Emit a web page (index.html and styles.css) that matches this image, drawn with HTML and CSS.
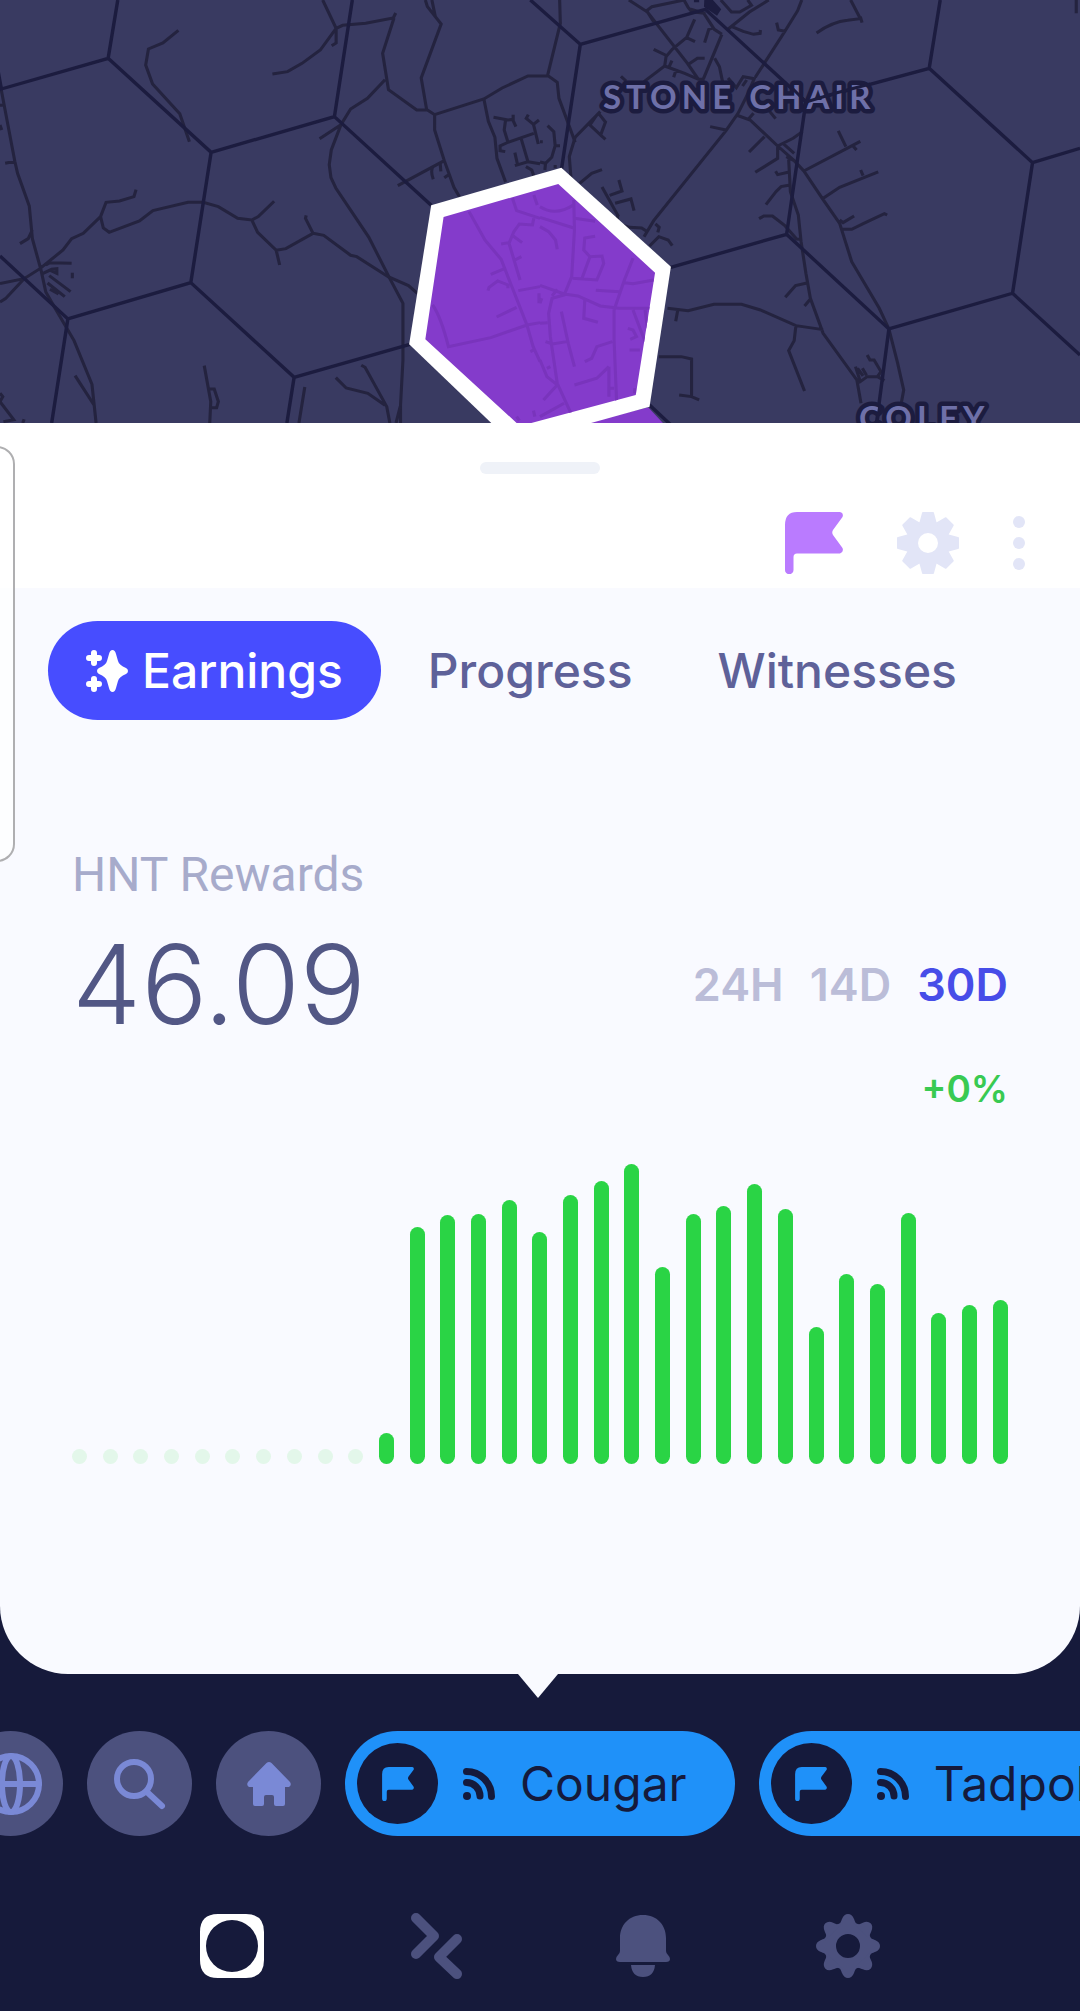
FILE: index.html
```html
<!DOCTYPE html>
<html lang="en">
<head>
    <meta charset="utf-8">
    <meta name="viewport" content="width=device-width, initial-scale=1">
    <title>Hotspot Rewards</title>
    <link rel="stylesheet" href="styles.css">
</head>
<body>
    <!-- shared icons -->
    <svg class="sprite" aria-hidden="true">
        <symbol id="flag" viewBox="0 0 58 62">
            <path d="M12 0H55Q59 1 57.500 5L48 18Q46.500 20.500 48 23L57.500 36Q59 40 55 41.500H12Q8.500 41.500 8.500 45V58A4.200 4.200 0 0 1 0 58V13Q0 0 12 0Z"/>
        </symbol>
        <symbol id="signal" viewBox="0 0 32 32">
            <circle cx="4" cy="28" r="4"/>
            <path d="M3.500 14.500A13.500 13.500 0 0 1 17 28M3.500 3.500A25 25 0 0 1 28.500 28.500" fill="none" stroke="currentColor" stroke-width="7" stroke-linecap="round"/>
        </symbol>
    </svg>

    <div class="map">
        <svg class="map-canvas" viewBox="0 0 1080 423" preserveAspectRatio="xMidYMin slice" role="img" aria-label="Hotspot map">
            <defs>
                <clipPath id="selected">
                    <path d="M1288 651L1621 552L1902 818L1846 1185L1500 1281V1269L1235 1018Z"/>
                </clipPath>
            </defs>
            <g transform="scale(.3444 .3333)">
                <!-- roads, west side -->
                <path class="road" d="M518 91L473 129L431 147L423 195L443 252L522 341L550 425M937 0L976 85L930 150L877 190L835 215L791 222M976 85L995 76L1062 70L1142 54L1149 39M976 85V129L963 137M1144 54L1111 160L1128 269L1210 330H1241L1262 344L1405 297L1458 264L1533 228H1568M1118 239L1067 295L1018 327L990 374L962 450L956 494L961 533L975 564L1071 712L1129 830L1170 910V1080L1163 1215V1269M928 416L990 374M1235 0L1241 20L1281 72L1223 234L1239 330M1254 0L1264 50M1262 344V390L1290 482L1318 562L1334 590M1290 482L1155 557M1256 503Q1250 515 1258 538M1278 488L1280 514M1306 522L1290 533"/>
                <path class="road" d="M1405 297L1418 364L1437 412L1443 475L1468 546M1433 352L1475 360L1490 358V344M1487 355L1498 380M1468 360L1464 390L1475 427L1452 438V452L1467 455M1475 427L1550 400M1534 344L1528 355L1549 373L1565 360M1549 373L1563 432M1513 415L1533 485L1495 497M1495 458L1503 495M1533 485L1568 491M1527 500L1544 510L1550 528"/>
                <path class="road" d="M0 250L43 484L51 520L85 618L94 716L119 810L133 876L160 925L215 1022L267 1153L279 1269M0 316H8M0 375L5 390M15 490L43 484M94 690L82 716L58 731M0 851L70 836L116 806L183 750L208 716L242 700L292 650L308 607L347 603L389 590L395 569M292 650L300 684L317 697L405 663L444 632L546 607H590L634 620L690 655L731 660L750 650L796 604M731 660L748 697L802 751L812 795M802 751L830 746L909 700L887 655L889 646M909 700L940 706L1018 766L1036 770L1127 830L1186 857L1212 880M0 906L16 896L70 836M133 795L145 788L208 790M125 820L150 808L165 806V820L148 812M210 818V835M143 827L205 875M138 849L188 890M145 868L170 882M218 1127L273 1215M593 1097L612 1205L609 1269M609 1167H622L634 1205L629 1223H612M885 1161L868 1269M975 1133L1005 1164L1068 1180L1118 1216M1049 1096L1060 1102L1123 1220L1132 1269M1162 1220L1150 1269M0 1180L8 1190L0 1205L40 1259L10 1265M70 1258L66 1269"/>
                <!-- roads, east side -->
                <g transform="translate(1568 0)">
                    <path class="road" d="M57 0L59 70L22 226L50 247L55 295L102 427M0 228H22M258 0L312 36L428 190L460 238M305 36L325 20L418 0M312 36L330 65M418 0L430 22L440 35L476 40L506 88L528 103M430 25L480 40M525 0L556 36H580L614 16L603 0M664 0L608 36L543 90M760 0L748 32L712 92L625 232M687 68L692 90L712 94M803 99Q850 65 893 61L930 56L902 0M930 50L935 68M1557 0V40M557 80L590 94L620 103L639 100L640 90M528 103L475 235M505 83L490 88L478 128M449 58L426 112L384 148L366 170L362 198L302 245M330 148L370 168M383 182L375 200M424 112L450 125M362 198L420 220L460 238H478M395 210L388 232M428 195L457 175H478M507 175L521 200L530 245M235 229L250 243M546 234L570 263L590 230L622 236L604 280L575 340L540 392L330 662L302 710M600 240L588 258M494 380L540 390M570 345L610 360L690 438L738 482L766 513L820 596L870 670L905 785L985 925L1013 987L1038 1088L1056 1170L1048 1215M606 356L620 340M665 332L684 356M652 410L607 456M690 438L735 415L762 395M690 438V475L625 517M707 432L738 460M715 470L738 482M722 478L727 575L750 645L758 725L772 820L785 895L822 1000L920 1140L932 1210M684 514L690 524L720 517M722 556L700 560L685 575L656 614M766 513L930 424M866 393L888 440M909 438L919 450M820 596L870 562L982 516M931 510L938 527M870 660L880 668L912 648M875 688H905L940 670L1000 641L1008 645M636 656L650 648H675L710 676L745 717L755 718M775 849L742 857L712 892M787 895L768 918M370 925L430 932L505 913H585L640 930L743 977L822 989M400 930L394 964M743 977L738 1022L722 1052L768 1173M345 1070H410L440 1077V1188M404 1185L440 1190L462 1200M916 1100L930 1145L950 1130H980L990 1115L970 1080H958L950 1065M922 1105L938 1128M936 1105L948 1126M980 1130L1000 1142"/>
                    <path class="road" d="M175 335L102 412L85 470L90 535M170 340L190 366L176 405L145 375L165 345M176 405L190 418M115 550L150 520L180 509M180 561L228 650M229 540L238 573L202 586M218 610L264 597L273 632M225 645V670L260 682L295 684L312 695M335 672L346 682L342 697M318 738L345 710L372 720L384 737M22 377L40 395L44 437L34 472L16 490L0 486M44 437H58M0 425H8M16 490L14 510M44 495V505"/>
                </g>
                <path class="block" d="M2045 0H2070L2094 28L2082 47L2044 20ZM2015 0H2030V7H2015Z"/>

                <path class="cell" d="M342 0L314 175L4 267L-8 200M314 175L613 457L971 350L1023 0M971 350L1252 616M613 457L554 848L197 957L0 768M554 848L854 1132L1190 1033M197 957L150 1269M854 1132L833 1269M1540 0L1685 133L1630 510M1685 133L2048 28L2340 305L2698 205L2730 0M2698 205L2998 488L3136 445M2998 488L2940 880L2581 987L2284 703L2340 305M2284 703L1945 803M2940 880L3136 1065M2581 987L2545 1269M1886 1215L1948 1275"/>
                <path class="cell-owned" d="M1882 1222L1925 1269H1700Z"/>
                <path class="cell-border" d="M1252 616L1630 503L1948 800L1886 1220L1492 1334L1188 1033Z"/>
                <path class="cell-owned" d="M1288 651L1621 552L1902 818L1846 1185L1500 1281V1269L1235 1018Z"/>
                <!-- streets inside the selected cell -->
                <g clip-path="url(#selected)">
                    <path class="street" d="M1362 635L1408 720L1455 778L1530 975L1548 1040L1568 1085M1256 915Q1280 950 1302 1040L1425 1013L1530 975L1568 968M1488 595L1500 632L1568 655M1550 655L1546 675L1508 672L1492 695L1478 730L1510 840M1455 732L1478 728M1490 708L1516 728M1495 780L1514 770M1425 823L1465 806M1417 872L1420 862L1445 843L1475 855V865M1505 872L1568 860M1442 951L1500 922M1550 585L1560 615M1540 1055L1550 1050M1565 880V910M1500 1250L1508 1262M1549 1232L1553 1250"/>
                    <path class="street" transform="translate(1568 0)" d="M0 620Q45 650 98 614M98 600L100 690L92 830L70 885L35 895L25 940L30 1010L50 1150L90 1240M0 652L98 684M0 680L25 695L45 720L50 748M100 655L160 664M160 709L130 714L127 750L145 770L180 768L185 790L165 840L95 835M145 770L122 835M270 775L245 840L215 930V1020L225 1269M245 848L270 851L330 840M162 871L230 875M0 856L70 882L110 888L175 918L230 925H330M130 900L127 955L168 967M62 935L82 1030L100 1100M16 1025L36 1032L78 1025M0 970L22 968M50 868L35 888M210 1025L165 1040L150 1075L130 1085M200 1100L165 1135L100 1155M0 1080L20 1130L50 1155L10 1200M20 1105L30 1100M270 930L290 985L315 1050M305 930L312 985M255 985L270 990L280 1010L262 1018M260 1050H290M200 1100V1190M215 1165H198M275 1165V1180M0 1250L70 1210M0 910L5 895"/>
                </g>
            </g>
            <text class="place" x="603" y="109">STONE CHAIR</text>
            <text class="place" x="859" y="430">COLEY</text>
            <path class="place-line" d="M792 88L806 102L836 93L870 84M806 102L804 112M880 405L877 423"/>
        </svg>
    </div>

    <main class="sheet">
        <header class="sheet-header">
            <div class="handle"></div>
            <div class="actions">
                <button class="icon-btn flag-btn" aria-label="Following">
                    <svg width="58" height="62"><use href="#flag"/></svg>
                </button>
                <button class="icon-btn" aria-label="Hotspot settings">
                    <svg width="62" height="62" viewBox="-31 -31 62 62">
                        <defs><path id="tooth" d="M-9-19L-6-30Q-6-31-5-31H5Q6-31 6-30L9-19Z"/></defs>
                        <circle class="ring" r="16"/>
                        <use href="#tooth"/>
                        <use href="#tooth" transform="rotate(45)"/>
                        <use href="#tooth" transform="rotate(90)"/>
                        <use href="#tooth" transform="rotate(135)"/>
                        <use href="#tooth" transform="rotate(180)"/>
                        <use href="#tooth" transform="rotate(225)"/>
                        <use href="#tooth" transform="rotate(270)"/>
                        <use href="#tooth" transform="rotate(315)"/>
                    </svg>
                </button>
                <button class="icon-btn" aria-label="More">
                    <svg width="12" height="56" viewBox="0 0 12 56">
                        <circle cx="6" cy="7" r="6"/>
                        <circle cx="6" cy="28" r="6"/>
                        <circle cx="6" cy="49" r="6"/>
                    </svg>
                </button>
            </div>
        </header>

        <nav class="tabs">
            <button class="tab active">
                <svg width="42" height="42" viewBox="0 0 42 42">
                    <path d="M26.500 0Q29 0 30 4L32 11Q33 15 40 18Q42 19 42 21Q42 23 40 24Q33 27 32 31L30 38Q29 42 26.500 42Q24 42 23 38L21 31Q20 27 13 24Q11 23 11 21Q11 19 13 18Q20 15 21 11L23 4Q24 0 26.500 0Z"/>
                    <path d="M8 3V13M3 8H13M8 29V39M3 34H13" stroke="currentColor" stroke-width="6" stroke-linecap="round"/>
                </svg>
                Earnings
            </button>
            <button class="tab">Progress</button>
            <button class="tab">Witnesses</button>
        </nav>

        <section class="rewards">
            <h2 class="rewards-label">HNT Rewards</h2>
            <div class="rewards-row">
                <div class="amount">46.09</div>
                <div class="ranges">
                    <button class="range">24H</button>
                    <button class="range">14D</button>
                    <button class="range active">30D</button>
                </div>
            </div>
            <div class="change">+0%</div>
            <div class="chart" id="chart" role="img" aria-label="Daily rewards"></div>
        </section>
    </main>

    <footer class="dock">
        <div class="shortcuts">
            <button class="round" aria-label="Explore">
                <svg class="line" width="62" height="62" viewBox="0 0 62 62">
                    <circle cx="31" cy="31" r="28"/>
                    <ellipse cx="31" cy="31" rx="9" ry="28"/>
                    <path d="M3 31H59"/>
                </svg>
            </button>
            <button class="round" aria-label="Search">
                <svg class="line" width="52" height="52" viewBox="0 0 52 52">
                    <circle cx="20" cy="21" r="17"/>
                    <path d="M33 34L48 48"/>
                </svg>
            </button>
            <button class="round" aria-label="Home">
                <svg width="44" height="44" viewBox="0 0 44 44">
                    <path d="M19.500 1Q22 -1 24.500 1L43 20Q45 23 42 25H38V42Q38 44 36 44H29Q27 44 27 42V35Q27 33 25 33H19Q17 33 17 35V42Q17 44 15 44H8Q6 44 6 42V25H2Q-1 23 1 20Z"/>
                </svg>
            </button>
            <button class="chip">
                <span class="chip-badge"><svg width="32" height="34"><use href="#flag"/></svg></span>
                <svg width="32" height="32"><use href="#signal"/></svg>
                Cougar
            </button>
            <button class="chip">
                <span class="chip-badge"><svg width="32" height="34"><use href="#flag"/></svg></span>
                <svg width="32" height="32"><use href="#signal"/></svg>
                Tadpole
            </button>
        </div>

        <nav class="nav">
            <a href="#hotspots" class="nav-item active" aria-label="Hotspots">
                <svg width="64" height="64" viewBox="0 0 64 64">
                    <path fill-rule="evenodd" d="M18 0H46Q64 0 64 18V46Q64 64 46 64H18Q0 64 0 46V18Q0 0 18 0ZM32 6A26 26 0 1 0 32 58A26 26 0 1 0 32 6Z"/>
                </svg>
            </a>
            <a href="#wallet" class="nav-item" aria-label="Wallet">
                <svg class="line thick" width="52" height="66" viewBox="0 0 52 66">
                    <path d="M5 5L23 23L5 41M46 26L28 44L46 61"/>
                </svg>
            </a>
            <a href="#alerts" class="nav-item" aria-label="Notifications">
                <svg width="54" height="62" viewBox="0 0 54 62">
                    <path d="M27 0C41 0 50 10 50 23V36Q50 38 52 40Q54 42 54 44Q54 47 50 47H4Q0 47 0 44Q0 42 2 40Q4 38 4 36V23C4 10 13 0 27 0ZM15 50H39Q38 62 27 62Q16 62 15 50Z"/>
                </svg>
            </a>
            <a href="#settings" class="nav-item" aria-label="Settings">
                <svg width="64" height="64" viewBox="-32 -32 64 64">
                    <defs><path id="lobe" d="M-12-20C-7-22-7-25-6-27Q-4-32 0-32Q4-32 6-27C7-25 7-22 12-20Z"/></defs>
                    <circle class="ring" r="18"/>
                    <use href="#lobe"/>
                    <use href="#lobe" transform="rotate(45)"/>
                    <use href="#lobe" transform="rotate(90)"/>
                    <use href="#lobe" transform="rotate(135)"/>
                    <use href="#lobe" transform="rotate(180)"/>
                    <use href="#lobe" transform="rotate(225)"/>
                    <use href="#lobe" transform="rotate(270)"/>
                    <use href="#lobe" transform="rotate(315)"/>
                </svg>
            </a>
        </nav>
    </footer>

    <div class="edge-panel"></div>

    <script>
        // relative reward per day, tallest day = 300
        const days = [0, 0, 0, 0, 0, 0, 0, 0, 0, 0, 31, 237, 249, 250, 264, 232, 269, 283, 300, 197,
            250, 258, 280, 255, 137, 190, 180, 251, 151, 159, 164];
        const chart = document.getElementById('chart');
        days.forEach(value => {
            const bar = document.createElement('div');
            bar.className = value ? 'bar' : 'bar empty';
            bar.style.height = `${value / 3}%`;
            chart.appendChild(bar);
        });
    </script>
</body>
</html>
```

FILE: styles.css
```css
* {
    box-sizing: border-box;
}
body {
    margin: 0;
    background: #161a3b;
    font-family: Inter, sans-serif;
    overflow-x: hidden;
}
button {
    border: none;
    background: none;
    padding: 0;
    font: inherit;
    color: inherit;
    cursor: pointer;
}
svg {
    display: block;
    fill: currentColor;
    flex-shrink: 0;
}
.line {
    fill: none;
    stroke: currentColor;
    stroke-width: 6;
    stroke-linecap: round;
    stroke-linejoin: round;
}
.thick {
    stroke-width: 10;
}
.ring {
    fill: none;
    stroke: currentColor;
    stroke-width: 12;
}
.sprite {
    position: absolute;
    width: 0;
    height: 0;
}

/* map */
.map {
    height: 423px;
    background: #393a61;
    overflow: hidden;
}
.map-canvas {
    width: 100%;
    height: 100%;
}
.road, .street, .cell, .place-line {
    fill: none;
}
.road {
    stroke: #24233f;
    stroke-width: 9;
}
.block {
    fill: #1c1c3f;
}
.cell {
    stroke: #1c1c3f;
    stroke-width: 10;
}
.cell-owned {
    fill: #843bcb;
}
.cell-border {
    fill: #fff;
}
.street {
    stroke: #7934bc;
    stroke-width: 9;
}
.place {
    font-family: Lato, sans-serif;
    font-size: 33px;
    font-weight: 700;
    letter-spacing: 5px;
    fill: #6e70a8;
    stroke: #1c1c3f;
    stroke-width: 9px;
    stroke-linejoin: round;
    paint-order: stroke;
}
.place-line {
    stroke: #1c1c3f;
    stroke-width: 3;
}

/* sheet */
.sheet {
    position: relative;
    background: #f9faff;
    border-radius: 0 0 68px 68px;
    padding-bottom: 210px;
}
.sheet::after {
    content: "";
    position: absolute;
    top: 100%;
    left: 50%;
    margin-left: -22px;
    border: 20px solid transparent;
    border-top: 24px solid #f9faff;
    border-bottom: none;
}
.sheet-header {
    background: #fff;
    padding: 39px 55px 14px;
}
.handle {
    width: 120px;
    height: 12px;
    margin: 0 auto 38px;
    border-radius: 6px;
    background: #eff2f8;
}
.actions {
    display: flex;
    justify-content: flex-end;
    align-items: center;
    gap: 54px;
}
.icon-btn {
    color: #e2e5f7;
}
.flag-btn {
    color: #ba7bff;
}
.tabs {
    display: flex;
    gap: 9px;
    padding: 33px 48px 0;
}
.tab {
    display: flex;
    align-items: center;
    gap: 14px;
    height: 99px;
    padding: 0 38px;
    border-radius: 50px;
    font-size: 48px;
    font-weight: 500;
    color: #5e6199;
}
.tab.active {
    background: #474dff;
    color: #fff;
}
.rewards {
    padding: 127px 72px 0;
}
.rewards-label {
    margin: 0;
    font-family: Roboto, sans-serif;
    font-size: 48px;
    font-weight: 400;
    line-height: 56px;
    color: #a7abcb;
}
.rewards-row {
    display: flex;
    justify-content: space-between;
    align-items: center;
}
.amount {
    font-size: 110px;
    font-weight: 300;
    line-height: 162px;
    color: #525785;
}
.ranges {
    display: flex;
    gap: 26px;
}
.range {
    font-size: 45px;
    font-weight: 600;
    color: #bbbdd8;
}
.range.active {
    color: #474de8;
}
.change {
    text-align: right;
    font-size: 37px;
    font-weight: 600;
    line-height: 48px;
    color: #39ca52;
}
.chart {
    display: flex;
    justify-content: space-between;
    align-items: flex-end;
    height: 300px;
    margin-top: 51px;
}
.bar {
    width: 15px;
    min-height: 15px;
    border-radius: 8px;
    background: #2ad445;
}
.bar.empty {
    background: #e3f7ea;
}

/* bottom dock */
.dock {
    padding-top: 57px;
    overflow: hidden;
}
.shortcuts {
    display: flex;
    gap: 24px;
    margin-left: -42px;
}
.round {
    display: flex;
    flex-shrink: 0;
    align-items: center;
    justify-content: center;
    width: 105px;
    height: 105px;
    border-radius: 50%;
    background: #4c517e;
    color: #7a89d6;
}
.chip {
    display: flex;
    flex-shrink: 0;
    align-items: center;
    gap: 25px;
    height: 105px;
    padding: 0 48px 0 12px;
    border-radius: 53px;
    background: #1f91f9;
    color: #151a3c;
    font-size: 48px;
}
.chip-badge {
    display: flex;
    align-items: center;
    justify-content: center;
    width: 81px;
    height: 81px;
    border-radius: 50%;
    background: #151a3c;
    color: #1f91f9;
}
.nav {
    display: flex;
    padding: 77px 12% 31px;
}
.nav-item {
    display: flex;
    flex: 1;
    align-items: center;
    justify-content: center;
    color: #4c517e;
}
.nav-item.active {
    color: #fff;
}

/* phone edge panel, lies over the sheet */
.edge-panel {
    position: absolute;
    top: 446px;
    left: -40px;
    width: 55px;
    height: 416px;
    border: 2px solid #afafb1;
    border-radius: 18px;
    background: rgba(255, 255, 255, .7);
}
```
